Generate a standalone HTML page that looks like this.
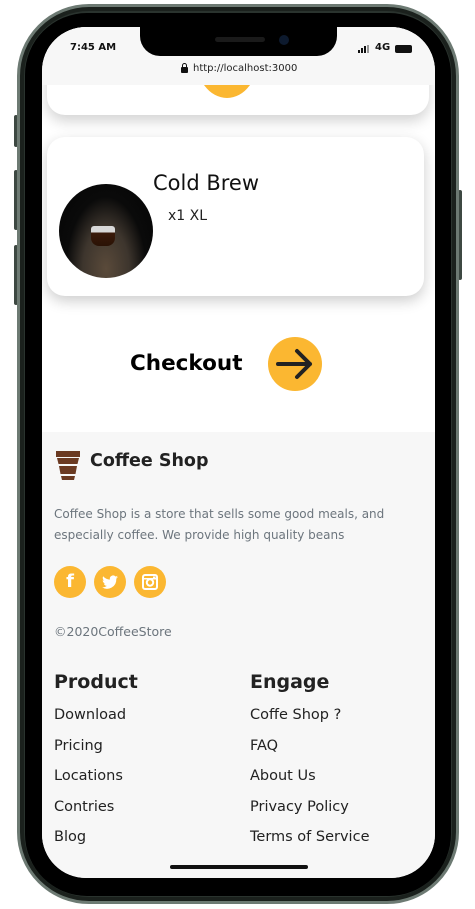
<!DOCTYPE html>
<html><head><style>
*{margin:0;padding:0;box-sizing:border-box}
body{width:475px;height:909px;background:#fff;position:relative;overflow:hidden;font-family:"Liberation Sans","DejaVu Sans",sans-serif}
.frame{position:absolute;left:17px;top:4px;width:442px;height:900px;border-radius:72px;background:#2a332e;border:3px solid #6d7a73;box-shadow:inset 0 0 0 4px #1b211d}
.bezel{position:absolute;left:25px;top:13px;width:426px;height:883px;border-radius:62px;background:#000}
.screen{position:absolute;left:42px;top:27px;width:393px;height:851px;border-radius:44px;background:#fff;overflow:hidden}
.btn{position:absolute;background:#3d4842;width:4px;border-radius:2px}
.abs{position:absolute}
.f{font-family:"DejaVu Sans",sans-serif}
</style></head><body>
<div class="btn" style="left:14px;top:115px;height:32px"></div>
<div class="btn" style="left:14px;top:170px;height:60px"></div>
<div class="btn" style="left:14px;top:245px;height:60px"></div>
<div class="btn" style="left:458px;top:190px;height:90px"></div>
<div class="frame"></div>
<div class="bezel"></div>
<div class="screen">
 <div class="abs" style="left:5px;top:-40px;width:382px;height:128px;border-radius:18px;background:#fff;box-shadow:0 6px 14px rgba(0,0,0,.18)"></div>
 <div class="abs" style="left:153px;top:-14px;width:64px;height:85px;border-radius:50%;background:#fbb731"></div>
 <div class="abs" style="left:0;top:0;width:393px;height:58px;background:#f7f7f7"></div>
 <div class="abs" style="left:98px;top:-2px;width:197px;height:31px;background:#000;border-radius:0 0 20px 20px"></div>
 <div class="abs" style="left:173px;top:10px;width:50px;height:5px;background:#1a1a1a;border-radius:3px"></div>
 <div class="abs" style="left:237px;top:8px;width:10px;height:10px;background:#0d1a2e;border-radius:50%"></div>
 <div class="abs f" style="left:28px;top:15px;font-size:10px;font-weight:bold;color:#111">7:45 AM</div>
 <div class="abs" style="left:316px;top:18px;width:12px;height:8px">
  <div class="abs" style="left:0;top:5px;width:2px;height:3px;background:#111"></div>
  <div class="abs" style="left:3px;top:3px;width:2px;height:5px;background:#111"></div>
  <div class="abs" style="left:6px;top:1px;width:2px;height:7px;background:#111"></div>
  <div class="abs" style="left:9px;top:0;width:2px;height:8px;background:#999"></div>
 </div>
 <div class="abs f" style="left:333px;top:15px;font-size:10px;font-weight:bold;color:#111">4G</div>
 <div class="abs" style="left:353px;top:18px;width:17px;height:8px;background:#111;border-radius:2px"></div>
 <div class="abs" style="left:139px;top:40px;width:7px;height:6px;background:#111;border-radius:1px"></div>
 <div class="abs" style="left:140px;top:36px;width:5px;height:6px;border:1.5px solid #111;border-radius:3px 3px 0 0"></div>
 <div class="abs f" style="left:151px;top:36px;font-size:10px;color:#222">http://localhost:3000</div>

 <div class="abs" style="left:5px;top:110px;width:377px;height:159px;border-radius:18px;background:#fff;box-shadow:0 5px 14px rgba(0,0,0,.2)"></div>
 <div class="abs" style="left:17px;top:157px;width:94px;height:94px;border-radius:50%;background:radial-gradient(ellipse at 50% 90%,#5a4a3a 0%,#3d352d 35%,#0a0a0a 60%,#050505 100%);overflow:hidden">
  <div class="abs" style="left:32px;top:42px;width:24px;height:20px;border-radius:3px 3px 8px 8px;background:linear-gradient(#d8d8d8 30%,#3a1a0a 35%,#2a1205)"></div>
 </div>
 <div class="abs f" style="left:111px;top:144px;font-size:21px;color:#111">Cold Brew</div>
 <div class="abs f" style="left:126px;top:181px;font-size:14px;color:#222">x1 XL</div>

 <div class="abs f" style="left:88px;top:324px;font-size:21.5px;font-weight:bold;color:#000">Checkout</div>
 <div class="abs" style="left:226px;top:310px;width:54px;height:54px;border-radius:50%;background:#fbb731">
  <svg width="54" height="54" viewBox="0 0 54 54"><path d="M10 27H42M29 14L42 27L29 40" stroke="#222" stroke-width="4" fill="none" stroke-linecap="round" stroke-linejoin="round"/></svg>
 </div>

 <div class="abs" style="left:0;top:405px;width:393px;height:446px;background:#f7f7f7"></div>
 <svg class="abs" style="left:12px;top:424px" width="28" height="30" viewBox="0 0 28 30"><path d="M2 0H26V6H2Z M3 7H25L23.5 13H4.5Z M5 15H23L21.5 23H6.5Z M7 25H21L20 29H8Z" fill="#6b3a22"/></svg>
 <div class="abs f" style="left:48px;top:424px;font-size:17.5px;font-weight:bold;color:#222">Coffee Shop</div>
 <div class="abs f" style="left:12px;top:477px;font-size:12px;line-height:21px;color:#6c757d;width:370px">Coffee Shop is a store that sells some good meals, and especially coffee. We provide high quality beans</div>
 <div class="abs" style="left:12px;top:539px;width:32px;height:32px;border-radius:50%;background:#fbb731;color:#fff;font:bold 18px 'DejaVu Sans';text-align:center;line-height:32px">f</div>
 <div class="abs" style="left:52px;top:539px;width:32px;height:32px;border-radius:50%;background:#fbb731"><svg width="32" height="32" viewBox="0 0 32 32"><path d="M24 11c-.6.3-1.2.4-1.9.5.7-.4 1.2-1 1.4-1.8-.6.4-1.3.6-2 .8a3.3 3.3 0 0 0-5.6 3C13.2 13.4 10.8 12.2 9.2 10.2c-.9 1.5-.4 3.4 1 4.4-.5 0-1-.2-1.5-.4 0 1.6 1.1 3 2.6 3.3-.5.1-1 .2-1.5.1.4 1.3 1.7 2.3 3.1 2.3A6.6 6.6 0 0 1 8 21.3 9.3 9.3 0 0 0 22.3 13V12.6c.7-.4 1.2-1 1.7-1.6z" fill="#fff"/></svg></div>
 <div class="abs" style="left:92px;top:539px;width:32px;height:32px;border-radius:50%;background:#fbb731"><svg width="32" height="32" viewBox="0 0 32 32"><rect x="9" y="9" width="14" height="14" rx="2" fill="none" stroke="#fff" stroke-width="2"/><circle cx="16" cy="16.5" r="3.2" fill="none" stroke="#fff" stroke-width="2"/><rect x="9" y="12" width="14" height="1.5" fill="#fff"/><rect x="19" y="10.5" width="2.5" height="2" fill="#fff"/></svg></div>
 <div class="abs f" style="left:12px;top:597px;font-size:12.5px;color:#6c757d">©2020CoffeeStore</div>

 <div class="abs f" style="left:12px;top:644px;font-size:19px;font-weight:bold;color:#222">Product</div>
 <div class="abs f" style="left:12px;top:673px;font-size:14.5px;line-height:30.5px;color:#222">Download<br>Pricing<br>Locations<br>Contries<br>Blog</div>
 <div class="abs f" style="left:208px;top:644px;font-size:19px;font-weight:bold;color:#222">Engage</div>
 <div class="abs f" style="left:208px;top:673px;font-size:14.5px;line-height:30.5px;color:#222">Coffe Shop ?<br>FAQ<br>About Us<br>Privacy Policy<br>Terms of Service</div>
 <div class="abs" style="left:128px;top:838px;width:138px;height:4px;border-radius:2px;background:#111"></div>
</div>
</body></html>
